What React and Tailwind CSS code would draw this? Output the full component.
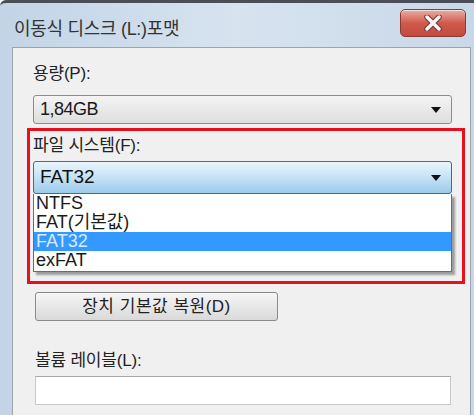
import React from 'react';

const font = { fontFamily: '"Liberation Sans", "Noto Sans CJK KR", sans-serif' };

// 작은 드롭다운 화살표
function Arrow() {
  return (
    <svg width="10" height="6" viewBox="0 0 10 6" className="shrink-0">
      <path d="M0 0 H10 L5 6 Z" fill="#111" />
    </svg>
  );
}

function CloseButton() {
  return (
    <div className="mt-[6px] w-[66px] h-[28px] rounded-[5px] border border-[#8a3b32] bg-gradient-to-b from-[#e6ada2] via-[#d05a4d] to-[#c24a3e] flex items-center justify-center shadow-[inset_0_1px_0_rgba(255,255,255,0.6)]">
      <svg width="18" height="16" viewBox="0 0 18 16">
        <path d="M3 2 L15 14 M15 2 L3 14" stroke="#6a3a34" strokeWidth="5.5" strokeLinecap="round" />
        <path d="M3 2 L15 14 M15 2 L3 14" stroke="#f4f4f4" strokeWidth="3.5" strokeLinecap="round" />
      </svg>
    </div>
  );
}

export default function App() {
  return (
    <div
      className="w-[474px] h-[415px] overflow-hidden bg-gradient-to-r from-[#c3d4e6] via-[#d7e3ef] to-[#c9d8e8] border-t-[3px] border-t-[#4a4f57] rounded-tl-[6px]"
      style={font}
    >
      {/* 제목 표시줄 */}
      <div className="h-[44px] flex items-start justify-between pl-[14px] pr-[8px]">
        <div className="pt-[15px] text-[18px] leading-[22px] text-[#333] tracking-[-0.3px]">
          이동식 디스크 (L:)포맷
        </div>
        <CloseButton />
      </div>

      {/* 본문 */}
      <div className="ml-[12px] mr-[3px] h-[372px] bg-[#f0f0f0] border-l border-t border-r border-[#9aa4ae] pl-[20px] pr-[17px] pt-[16px]">
        <div className="text-[17px] leading-[20px] text-[#222] tracking-[-0.2px]">용량(P):</div>
        <div className="mt-[11px] h-[29px] w-[419px] rounded-[3px] border border-[#8c8c8c] bg-gradient-to-b from-[#f4f4f4] to-[#dedede] flex items-center justify-between pl-[6px] pr-[10px]">
          <span className="text-[18px] text-[#1a1a1a] tracking-[-0.5px]">1,84GB</span>
          <Arrow />
        </div>

        {/* 빨간 강조 상자 */}
        <div className="mt-[4px] -ml-[6px] w-[438px] h-[156px] border-[3px] border-[#e8101c] pl-[3px] pt-[5px]">
          <div className="text-[17px] leading-[20px] text-[#222] tracking-[-0.2px]">파일 시스템(F):</div>
          <div className="mt-[5px] h-[33px] w-[419px] rounded-[3px] border border-[#3f6e90] bg-gradient-to-b from-[#eaf5fc] via-[#c4e2f5] to-[#9ccbea] flex items-center justify-between pl-[6px] pr-[10px]">
            <span className="text-[19px] text-[#111]">FAT32</span>
            <Arrow />
          </div>
          <div className="w-[419px] h-[78px] bg-white border border-[#6c6c6c] border-t-0 shadow-[3px_3px_2px_rgba(0,0,0,0.35)] text-[18px] leading-[19px] text-[#1a1a1a]">
            <div className="pl-[2px] h-[19px]">NTFS</div>
            <div className="pl-[2px] h-[19px]">FAT(기본값)</div>
            <div className="pl-[2px] h-[19px] bg-[#3399ff] text-[#d8ecff]">FAT32</div>
            <div className="pl-[2px] h-[19px]">exFAT</div>
          </div>
        </div>

        <button className="mt-[8px] ml-[2px] w-[243px] h-[29px] rounded-[3px] border border-[#8a8a8a] bg-gradient-to-b from-[#f6f6f6] to-[#d9d9d9] text-[17px] text-[#222] tracking-[0.5px] flex items-center justify-center">
          장치 기본값 복원(D)
        </button>

        <div className="mt-[30px] ml-[2px] text-[17px] leading-[20px] text-[#222] tracking-[-0.2px]">볼륨 레이블(L):</div>
        <div className="mt-[5px] ml-[2px] w-[416px] h-[29px] bg-white border border-[#c8c8c8] border-t-[#a9a9a9]" />
      </div>
    </div>
  );
}
